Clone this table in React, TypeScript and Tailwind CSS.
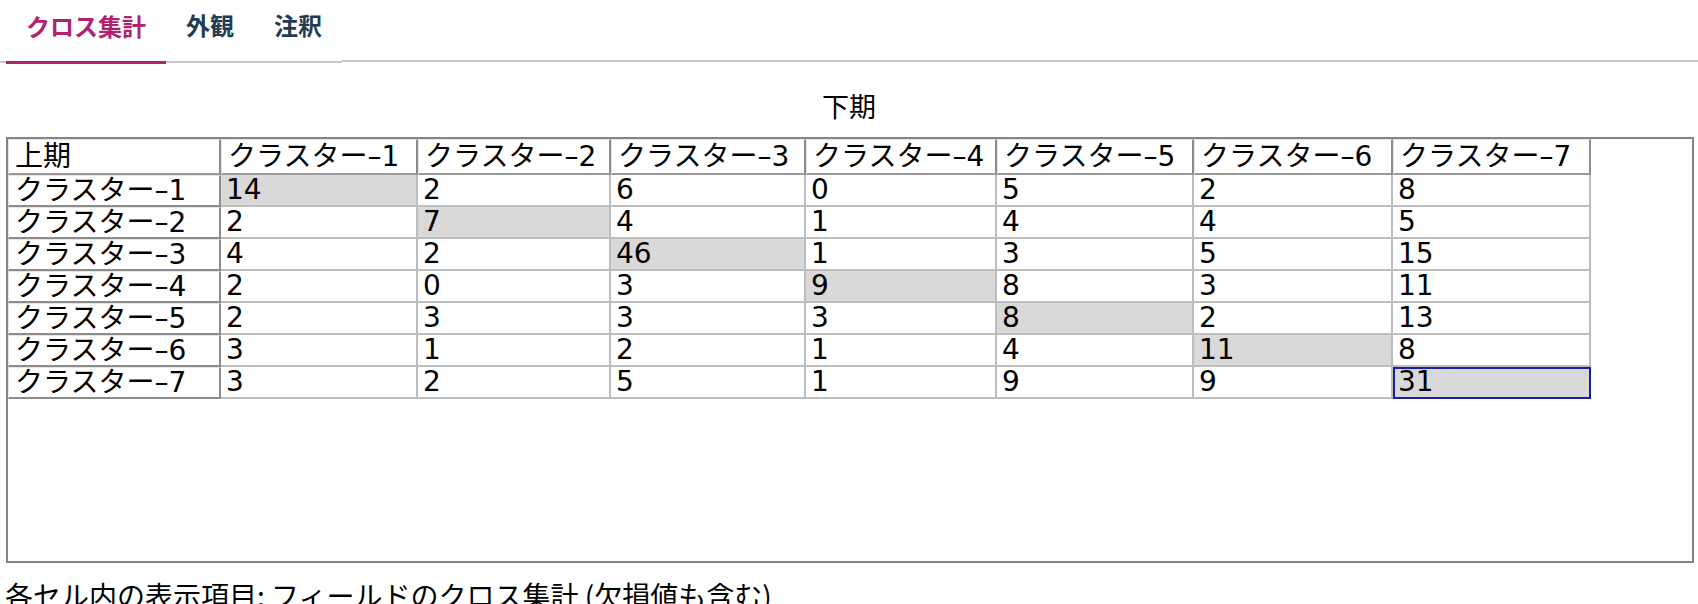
import React from "react";

const cols = [
  "クラスター–1",
  "クラスター–2",
  "クラスター–3",
  "クラスター–4",
  "クラスター–5",
  "クラスター–6",
  "クラスター–7",
];

const data: number[][] = [
  [14, 2, 6, 0, 5, 2, 8],
  [2, 7, 4, 1, 4, 4, 5],
  [4, 2, 46, 1, 3, 5, 15],
  [2, 0, 3, 9, 8, 3, 11],
  [2, 3, 3, 3, 8, 2, 13],
  [3, 1, 2, 1, 4, 11, 8],
  [3, 2, 5, 1, 9, 9, 31],
];

const widths = [213, 197, 193, 195, 191, 197, 199, 198];

export default function App() {
  return (
    <div className="w-[1698px] bg-white text-black font-['DejaVu_Sans','Noto_Sans_CJK_JP',sans-serif]">
      {/* Tabs */}
      <div className="flex items-end h-[64px] font-['Noto_Sans_CJK_JP',sans-serif] font-bold text-[24px] leading-[34px]">
        <div className="w-[6px] border-b-2 border-[#c8c8c8] mb-[1px]" />
        <div className="h-full px-[20px] pt-[9px] border-b-[3px] border-[#b0226e] text-[#b0226e]">
          クロス集計
        </div>
        <div className="h-full px-[20px] pt-[9px] border-b-2 border-[#c8c8c8] mb-[1px] text-[#233a52]">
          外観
        </div>
        <div className="h-full px-[20px] pt-[9px] border-b-2 border-[#c8c8c8] mb-[1px] text-[#233a52]">
          注釈
        </div>
        <div className="flex-1 border-b-2 border-[#c8c8c8] mb-[2px]" />
      </div>

      {/* Caption */}
      <div className="mt-[26px] text-center text-[27px] leading-[32px] font-['Noto_Sans_CJK_JP',sans-serif]">
        下期
      </div>

      {/* Box */}
      <div className="mt-[15px] ml-[6px] mr-[4px] h-[426px] border-2 border-[#858585] overflow-hidden">
        <table className="table-fixed border-separate border-spacing-0 text-[28px]">
          <colgroup>
            {widths.map((w, i) => (
              <col key={i} style={{ width: w }} />
            ))}
          </colgroup>
          <thead>
            <tr>
              <th className="text-left font-normal px-[6px] leading-[33px] border-t border-l border-[#e4e4e4] border-r-2 border-b-2 border-r-[#8c8c8c] border-b-[#9a9a9a]">
                上期
              </th>
              {cols.map((c) => (
                <th
                  key={c}
                  className="text-left font-normal px-[6px] leading-[33px] whitespace-nowrap overflow-hidden border-t border-l border-[#e4e4e4] border-r-2 border-b-2 border-r-[#8c8c8c] border-b-[#9a9a9a]"
                >
                  {c}
                </th>
              ))}
            </tr>
          </thead>
          <tbody>
            {data.map((row, r) => (
              <tr key={r}>
                <th className="text-left font-normal px-[6px] leading-[29px] whitespace-nowrap overflow-hidden border-t border-l border-[#e4e4e4] border-r-2 border-b-2 border-r-[#8c8c8c] border-b-[#8c8c8c]">
                  {cols[r]}
                </th>
                {row.map((v, c) => {
                  const diag = r === c;
                  const sel = r === 6 && c === 6;
                  return (
                    <td
                      key={c}
                      className={
                        "px-[5px] leading-[30px] border-r-2 border-b-2 border-[#bdbdbd] " +
                        (diag ? "bg-[#d9d9d9] " : "") +
                        (sel ? "outline-2 -outline-offset-2 outline-[#1d1da0]" : "")
                      }
                    >
                      {v}
                    </td>
                  );
                })}
              </tr>
            ))}
          </tbody>
        </table>
      </div>

      {/* Footer */}
      <div className="mt-[16px] pl-[5px] text-[28px] leading-[32px] whitespace-nowrap font-['Noto_Sans_CJK_JP',sans-serif]">
        各セル内の表示項目: フィールドのクロス集計 (欠損値も含む)
      </div>
    </div>
  );
}
